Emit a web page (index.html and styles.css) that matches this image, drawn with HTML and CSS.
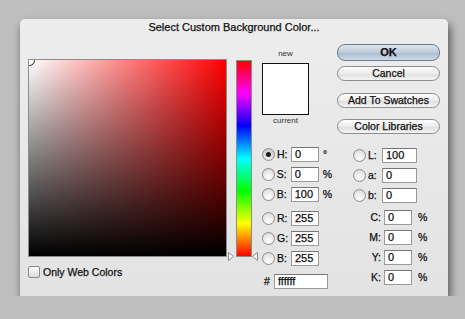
FILE: index.html
```html
<!DOCTYPE html>
<html lang="en">

<head>
    <meta charset="UTF-8">
    <meta name="viewport" content="width=device-width, initial-scale=1.0">
    <title>Select Custom Background Color</title>
    <link rel="stylesheet" href="styles.css">
</head>

<body>
    <div class="dialog">
        <div class="title">Select Custom Background Color...</div>

        <div class="dialog-body">
            <div class="picker-col">
                <div class="field"><span class="marker"></span></div>
                <label class="web-only"><span class="checkbox"></span>Only Web Colors</label>
            </div>

            <div class="hue-col">
                <div class="hue-bar"></div>
                <svg class="arrow arrow-left" width="6" height="9" viewBox="0 0 6 9">
                    <path d="M0.5 0.5 L5.5 4.5 L0.5 8.5 Z" fill="#fff" stroke="#8a8a8a" stroke-width="1" />
                </svg>
                <svg class="arrow arrow-right" width="6" height="9" viewBox="0 0 6 9">
                    <path d="M5.5 0.5 L0.5 4.5 L5.5 8.5 Z" fill="#fff" stroke="#8a8a8a" stroke-width="1" />
                </svg>
            </div>

            <div class="mid-col">
                <div class="preview">
                    <span class="small-label">new</span>
                    <div class="swatch"></div>
                    <span class="small-label">current</span>
                </div>

                <div class="group first-group">
                    <div class="row"><span class="radio checked"></span><span class="lbl">H:</span><input class="num" type="text" value="0"><span class="unit">°</span></div>
                    <div class="row"><span class="radio"></span><span class="lbl">S:</span><input class="num" type="text" value="0"><span class="unit">%</span></div>
                    <div class="row"><span class="radio"></span><span class="lbl">B:</span><input class="num" type="text" value="100"><span class="unit">%</span></div>
                </div>
                <div class="group">
                    <div class="row"><span class="radio"></span><span class="lbl">R:</span><input class="num" type="text" value="255"></div>
                    <div class="row"><span class="radio"></span><span class="lbl">G:</span><input class="num" type="text" value="255"></div>
                    <div class="row"><span class="radio"></span><span class="lbl">B:</span><input class="num" type="text" value="255"></div>
                </div>
                <div class="row hex-row"><span class="hash">#</span><input class="num hex" type="text" value="ffffff"></div>
            </div>

            <div class="right-col">
                <button class="btn btn-default">OK</button>
                <button class="btn btn-cancel">Cancel</button>
                <button class="btn btn-swatches">Add To Swatches</button>
                <button class="btn btn-libraries">Color Libraries</button>

                <div class="group lab-group">
                    <div class="row"><span class="radio"></span><span class="lbl">L:</span><input class="num wide" type="text" value="100"></div>
                    <div class="row"><span class="radio"></span><span class="lbl">a:</span><input class="num wide" type="text" value="0"></div>
                    <div class="row"><span class="radio"></span><span class="lbl">b:</span><input class="num wide" type="text" value="0"></div>
                </div>
                <div class="group cmyk-group">
                    <div class="row"><span class="cmyk-lbl">C:</span><input class="num" type="text" value="0"><span class="unit pct">%</span></div>
                    <div class="row"><span class="cmyk-lbl">M:</span><input class="num" type="text" value="0"><span class="unit pct">%</span></div>
                    <div class="row"><span class="cmyk-lbl">Y:</span><input class="num" type="text" value="0"><span class="unit pct">%</span></div>
                    <div class="row"><span class="cmyk-lbl">K:</span><input class="num" type="text" value="0"><span class="unit pct">%</span></div>
                </div>
            </div>
        </div>
    </div>
</body>

</html>
```

FILE: styles.css
```css
body {
    margin: 0;
    background-color: #bfbfbf;
    font-family: "Liberation Sans", Arial, sans-serif;
    font-size: 10.5px;
    color: #111;
    -webkit-text-stroke: 0.25px #111;
}

.dialog {
    width: 428px;
    height: 277px;
    margin: 19px 0 0 20px;
    background: linear-gradient(#ededed, #e3e3e3);
    border-radius: 5px 5px 0 0;
    box-shadow: 2px 5px 10px rgba(0, 0, 0, 0.6);
}

.title {
    height: 18px;
    line-height: 17px;
    text-align: center;
    font-size: 11px;
    color: #111;
}

.dialog-body {
    display: flex;
    padding-left: 8px;
}

/* big saturation / brightness square */
.picker-col {
    width: 199px;
    margin-top: 22px;
}

.field {
    position: relative;
    width: 199px;
    height: 198px;
    box-sizing: border-box;
    border: 1px solid #8c8c8c;
    background: linear-gradient(to bottom, rgba(0, 0, 0, 0), #000),
        linear-gradient(to right, #fff, #f00);
    overflow: hidden;
}

.marker {
    position: absolute;
    left: -5px;
    top: -5px;
    width: 9px;
    height: 9px;
    border: 1px solid #222;
    border-radius: 50%;
}

.web-only {
    display: flex;
    align-items: center;
    gap: 3px;
    margin-top: 8px;
    height: 13px;
}

.checkbox {
    width: 12px;
    height: 12px;
    box-sizing: border-box;
    border: 1px solid #8a8a8a;
    border-radius: 2px;
    background: linear-gradient(#fff, #dadada);
}

/* hue slider */
.hue-col {
    position: relative;
    width: 30px;
    height: 197px;
    margin: 23px 0 0 1px;
}

.hue-bar {
    width: 16px;
    height: 197px;
    margin-left: 8px;
    box-sizing: border-box;
    border: 1px solid #8c8c8c;
    background: linear-gradient(#f00, #f0f, #00f, #0ff, #0f0, #ff0, #f00);
}

.arrow {
    position: absolute;
    bottom: -4px;
}

.arrow-left {
    left: 0;
}

.arrow-right {
    right: 0;
}

/* middle column */
.mid-col {
    width: 70px;
    margin-left: 4px;
}

.preview {
    width: 47px;
    margin-top: 12px;
    display: flex;
    flex-direction: column;
    align-items: center;
}

.small-label {
    font-size: 8px;
    line-height: 10px;
    color: #333;
    -webkit-text-stroke: 0;
}

.swatch {
    width: 47px;
    height: 52px;
    margin: 4px 0 1px;
    box-sizing: border-box;
    border: 1px solid #111;
    background-color: #fff;
}

.first-group {
    margin-top: 18px;
}

.group + .group {
    margin-top: 4px;
}

.row {
    display: flex;
    align-items: center;
    height: 20px;
}

.radio {
    width: 13px;
    height: 13px;
    margin-right: 2px;
    box-sizing: border-box;
    border: 1px solid #8e8e8e;
    border-radius: 50%;
    background: radial-gradient(circle at 50% 75%, #fff, #d6d6d6);
    position: relative;
}

.radio.checked {
    background: radial-gradient(circle at 50% 75%, #f4f4f4, #bdbdbd);
}

.radio.checked::after {
    content: "";
    position: absolute;
    left: 3px;
    top: 3px;
    width: 5px;
    height: 5px;
    border-radius: 50%;
    background-color: #1a1a1a;
}

.lbl {
    width: 14px;
}

.num {
    width: 28px;
    height: 15px;
    margin: 0;
    padding: 0 0 0 3px;
    box-sizing: border-box;
    border: 1px solid #9a9a9a;
    border-top-color: #767676;
    background-color: #fff;
    font-family: "Liberation Sans", Arial, sans-serif;
    font-size: 11px;
    color: #111;
    -webkit-text-stroke: 0.25px #111;
    outline: none;
}

.num.wide {
    width: 35px;
}

.unit {
    margin-left: 4px;
}

.hex-row {
    margin-top: 3px;
}

.hash {
    width: 10px;
    margin-left: 2px;
}

.num.hex {
    width: 54px;
}

/* buttons and lab / cmyk */
.right-col {
    width: 103px;
    margin-left: 5px;
}

.btn {
    display: block;
    width: 103px;
    height: 15px;
    padding: 0;
    border: 1px solid #8d8d8d;
    border-radius: 8px;
    background: linear-gradient(#fdfdfd, #ececec 50%, #dedede 51%, #f5f5f5);
    font-family: "Liberation Sans", Arial, sans-serif;
    font-size: 10.5px;
    line-height: 13px;
    color: #111;
    -webkit-text-stroke: 0.25px #111;
    cursor: pointer;
}

.btn-default {
    height: 17px;
    margin-top: 7px;
    border-color: #6b7b8f;
    background: linear-gradient(#dfe6ee, #bccad9 50%, #a9bbcf 51%, #cfdae6);
    font-size: 11px;
    font-weight: bold;
    line-height: 15px;
}

.btn-cancel {
    margin-top: 5px;
}

.btn-swatches {
    margin-top: 12px;
}

.btn-libraries {
    margin-top: 11px;
}

.lab-group {
    margin-top: 11px;
    padding-left: 16px;
}

.group.cmyk-group {
    margin-top: 2px;
}

.cmyk-lbl {
    width: 44px;
    margin-right: 3px;
    text-align: right;
}

.unit.pct {
    margin-left: 6px;
}
```
